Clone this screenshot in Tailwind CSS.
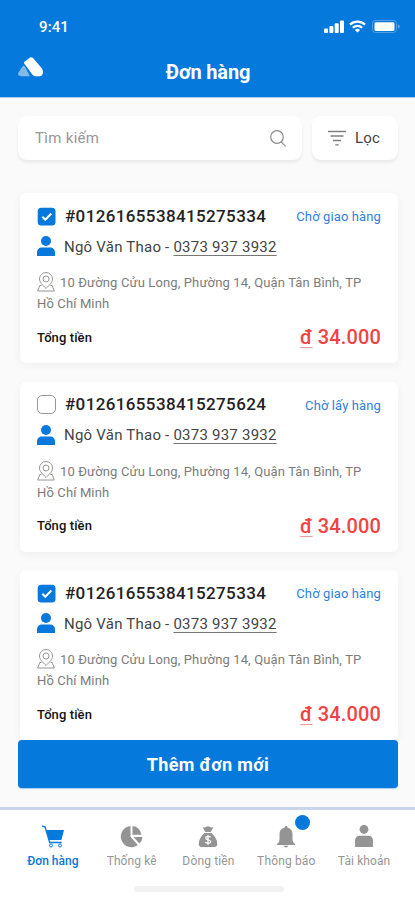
<!DOCTYPE html>
<html lang="vi">
<head>
<meta charset="utf-8">
<meta name="viewport" content="width=device-width, initial-scale=1">
<title>Đơn hàng</title>
<script src="https://cdn.jsdelivr.net/npm/@tailwindcss/browser@4"></script>
</head>
<body class="font-['Roboto',sans-serif] bg-[#fafafa]">
<svg class="hidden">
  <symbol id="checked" viewBox="0 0 19 19"><rect x=".7" y=".7" width="17.800" height="17.800" rx="3.500" fill="#0778dc"/><path d="M5.300 9.700l3 3 6-6.200" fill="none" stroke="#fff" stroke-width="2"/></symbol>
  <symbol id="unchecked" viewBox="0 0 19 19"><rect x=".5" y=".5" width="18" height="18" rx="4.500" fill="#fff" stroke="#999"/></symbol>
  <symbol id="user" viewBox="0 0 18 20"><circle cx="9" cy="5" r="5" fill="#0778dc"/><path d="M0 20v-3.500c0-3 2-5 5-5h8c3 0 5 2 5 5V20z" fill="#0778dc"/></symbol>
  <symbol id="place" viewBox="0 0 18 20"><g fill="none" stroke="#8a8a8a" stroke-width=".9"><path d="M9 16.500C5.500 13 2.500 10.300 2.500 7a6.500 6.500 0 0 1 13 0c0 3.300-3 6-6.500 9.500z"/><circle cx="9" cy="7" r="3"/><path d="M4.500 13.500H2.800L.7 19h16.600l-2.100-5.500h-1.700"/></g></symbol>
</svg>
<div class="w-[415px] h-[900px] flex flex-col overflow-hidden">
  <header class="h-[98px] shrink-0 bg-[#0679dc] border-b border-[#a5ccf0] text-white flex flex-col">
    <div class="h-[52px] pt-[2px] pl-[39px] pr-[16px] flex items-center justify-between">
      <span class="text-[15px] font-medium tracking-[0.1px]">9:41</span>
      <div class="flex items-center -mt-[2px]">
        <svg class="w-[20px] h-[13px]" viewBox="0 0 20 13" fill="#fff"><rect x="0" y="8.500" width="4" height="4.500" rx="1"/><rect x="5.400" y="6" width="4" height="7" rx="1"/><rect x="10.700" y="3.300" width="4" height="9.700" rx="1"/><rect x="16" y="0.500" width="4" height="12.500" rx="1"/></svg>
        <svg class="w-[17px] h-[13px] ml-[5px]" viewBox="0 0 17 13" fill="none" stroke="#fff" stroke-width="2.200"><path d="M1 4.600a11 11 0 0 1 15 0M3.800 7.700a7 7 0 0 1 9.400 0"/><path d="M8.500 12.500L5.900 9.900a3.800 3.800 0 0 1 5.200 0z" fill="#fff" stroke="none"/></svg>
        <svg class="w-[29px] h-[13px] ml-[5px] -mr-[1px]" viewBox="0 0 29 13"><rect x="1.500" y=".5" width="24" height="12" rx="3" fill="none" stroke="#4f9fe6"/><rect x="3.500" y="2.300" width="20" height="8.600" rx="1.300" fill="#fff"/><path d="M27 4.500v4c1.300-.5 1.700-1.200 1.700-2S28.300 5 27 4.500z" fill="#72b1eb"/></svg>
      </div>
    </div>
    <div class="grid grid-cols-[1fr_auto_1fr] h-[45px]">
      <svg class="w-[26px] h-[20px] ml-[18px] mt-[5px]" viewBox="0 0 26 20"><path d="M4.500 9.500Q6 8 7 10l5 9.300H3.500Q-1.500 18.500.7 15z" fill="#83baec"/><path d="M6.500 4.800L12 .5q1.500-.9 3 .6l9 10.500c2 3 1 7.500-2.500 7.700h-4q-2 0-3.200-1.800L6.200 6.500q-.6-1 .3-1.700z" fill="#fff"/></svg>
      <h1 class="text-[20px] leading-[24px] font-bold mt-[8px] tracking-[-0.15px] ml-[1px]">Đơn hàng</h1>
    </div>
  </header>

  <div class="h-[95px] shrink-0 pt-[18px] pl-[18px] pr-[17px] flex gap-[10px]">
    <div class="w-[284px] h-[44px] bg-white rounded-[9px] shadow-[0_3px_3px_rgba(0,0,0,0.06)] pl-[17px] pr-[16px] flex items-center justify-between">
      <span class="text-[15px] text-[#979797] tracking-[0.3px]">Tìm kiếm</span>
      <svg class="w-[16px] h-[17px]" viewBox="0 0 16 17" fill="none" stroke="#8c8c8c" stroke-width="1.200"><circle cx="7" cy="7" r="6.300"/><path d="M11.300 11.800l4.200 4.500"/></svg>
    </div>
    <div class="w-[86px] h-[44px] bg-white rounded-[9px] shadow-[0_3px_3px_rgba(0,0,0,0.06)] pl-[16px] flex items-center">
      <svg class="w-[18px] h-[16px]" viewBox="0 0 18 16" fill="none" stroke="#808080" stroke-width="1.300"><path d="M0 1.500h18M2.500 6h13M5 10.500h8M7.300 14.800h3.400"/></svg>
      <span class="text-[15px] text-[#444] ml-[9px] tracking-[0.2px]">Lọc</span>
    </div>
  </div>

  <main id="orders" class="h-[547px] shrink-0 pl-[20px] pr-[17px] flex flex-col gap-[18.500px] overflow-visible"></main>

  <div class="relative z-10 shrink-0 h-[67px] bg-[#fafafa] px-[17px] pl-[18px]">
    <button class="w-[380px] h-[48px] bg-[#0679dc] rounded-[4px] text-white text-[18px] font-bold tracking-[0.35px] shadow-[0_1px_1px_#a9cbee]">Thêm đơn mới</button>
  </div>

  <nav class="relative z-10 grow bg-white border-t-[3px] border-[#cad4ea] flex flex-col items-center text-[12px] leading-[14px] text-[#969696]">
    <div class="w-full h-[76px] pl-[14px] pr-[12px] pt-[15px] grid grid-cols-5">
      <div class="flex flex-col items-center text-[#0679dc]">
        <svg class="w-[22px] h-[23px]" viewBox="0 0 22 23"><path d="M0 1.200l3 .6 4.700 15.700h12" fill="none" stroke="#0679dc" stroke-width="1.300"/><path d="M3.800 5H22l-2.600 10H7z" fill="#0679dc"/><circle cx="9" cy="20.500" r="1.500" fill="none" stroke="#0679dc"/><circle cx="18" cy="20.500" r="1.500" fill="none" stroke="#0679dc"/></svg>
        <span class="mt-[6px] font-medium whitespace-nowrap">Đơn hàng</span>
      </div>
      <div class="flex flex-col items-center">
        <svg class="w-[23px] h-[23px] ml-[2px]" viewBox="0 0 23 23" fill="#949494"><path d="M10.500 1v10.700l7.300 8.300A10.600 10.600 0 1 1 10.500 1z"/><path d="M12.500 1a10 10 0 0 1 9 8.800h-9z"/><path d="M13.500 12h9a9 9 0 0 1-3.200 6.500z"/></svg>
        <span class="mt-[6px] ml-[2px] tracking-[0.1px] whitespace-nowrap">Thống kê</span>
      </div>
      <div class="flex flex-col items-center">
        <svg class="w-[20px] h-[23px]" viewBox="0 0 20 23"><path d="M4.500 2.200q2.300.7 4-.5 1.500-1 3 0 1.700 1.200 4 .5l-3 4.800h-5z" fill="#949494"/><path d="M6.500 8h7c3.500 3 5.800 7 5.800 11 0 2-1 3-3 3H3.700c-2 0-3-1-3-3 0-4 2.300-8 5.800-11z" fill="#949494"/><path d="M12.700 12.200c-1.500-1.300-5-1-5 .8 0 2.300 5 1.400 5 3.700 0 2-3.800 2-5.400.6M10 10v9.800" fill="none" stroke="#fff" stroke-width="1.300"/></svg>
        <span class="mt-[6px] tracking-[0.15px] whitespace-nowrap">Dòng tiền</span>
      </div>
      <div class="flex flex-col items-center relative">
        <svg class="w-[18px] h-[23px]" viewBox="0 0 18 23" fill="#949494"><path d="M9 1c1 0 1.500.6 1.500 1.800C14 3.500 15.500 6 15.500 9v5.500c0 2 .8 3 2.500 4.500v1H0v-1c1.700-1.500 2.500-2.500 2.500-4.500V9c0-3 1.500-5.500 5-6.200C7.500 1.600 8 1 9 1zM6.500 20.700h5q-.8 1.800-2.500 1.800t-2.500-1.800z"/></svg>
        <span class="absolute left-[48px] top-[-10px] w-[15px] h-[15px] rounded-full bg-[#0679dc]"></span>
        <span class="mt-[6px] tracking-[0.15px] whitespace-nowrap">Thông báo</span>
      </div>
      <div class="flex flex-col items-center">
        <svg class="w-[18px] h-[23px]" viewBox="0 0 18 23" fill="#949494"><circle cx="9" cy="4.300" r="4.400"/><path d="M0 22v-6c0-3.500 1.800-5.200 5.200-5.200h7.600c3.400 0 5.200 1.700 5.200 5.200v6z"/></svg>
        <span class="mt-[6px] tracking-[0.1px] whitespace-nowrap">Tài khoản</span>
      </div>
    </div>
    <div class="w-[150px] h-[6px] ml-[2px] bg-[#f1f1f1] rounded-[3px]"></div>
  </nav>
</div>
<script>
const orders = [
  { id: "#0126165538415275334", status: "Chờ giao hàng", icon: "checked" },
  { id: "#0126165538415275624", status: "Chờ lấy hàng", icon: "unchecked" },
  { id: "#0126165538415275334", status: "Chờ giao hàng", icon: "checked" },
];
document.getElementById("orders").innerHTML = orders.map(o => `
  <article class="h-[170px] shrink-0 bg-white rounded-[6px] shadow-[0_3px_10px_rgba(0,0,0,0.045)] pl-[17px] pr-[17px] pt-[12px]">
    <div class="flex items-center h-[22px]">
      <svg class="w-[19px] h-[19px]"><use href="#${o.icon}"/></svg>
      <span class="ml-[9px] text-[17px] font-medium text-[#222] tracking-[0.37px] mt-[1px]">${o.id}</span>
      <span class="ml-auto text-[13px] text-[#3180dd] tracking-[0.12px] mt-[2px]">${o.status}</span>
    </div>
    <div class="flex items-center h-[22px] mt-[8px]">
      <svg class="w-[18px] h-[20px]"><use href="#user"/></svg>
      <span class="ml-[9px] mt-[2px] text-[15px] text-[#444] tracking-[0.23px]">Ngô Văn Thao - <span class="underline underline-offset-[3px] decoration-1 decoration-[#777]">0373 937 3932</span></span>
    </div>
    <p class="mt-[15px] text-[13px] leading-[21px] text-[#7c7c7c] tracking-[0.13px] whitespace-nowrap"><svg class="inline-block align-middle w-[18px] h-[20px] mr-[5px] -mt-[3px]"><use href="#place"/></svg>10 Đường Cửu Long, Phường 14, Quận Tân Bình, TP<br>Hồ Chí Minh</p>
    <div class="flex items-center justify-between mt-[11px] h-[24px]">
      <span class="text-[13px] font-medium text-[#111] tracking-[0.1px] mt-[1px]">Tổng tiền</span>
      <span class="text-[20px] font-medium text-[#f04444] tracking-[0.15px]"><span class="underline decoration-1 underline-offset-[3px] decoration-[#f59a9a]">đ</span> 34.000</span>
    </div>
  </article>`).join("");
</script>
</body>
</html>
